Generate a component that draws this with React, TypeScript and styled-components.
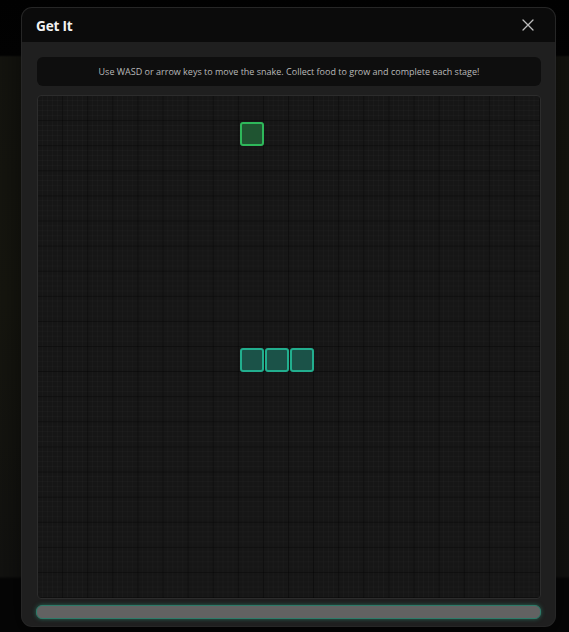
import styled, { createGlobalStyle } from "styled-components";

const GlobalStyle = createGlobalStyle`
  html, body {
    margin: 0;
    padding: 0;
    background: #050505;
    font-family: "Open Sans", "Noto Sans", "Liberation Sans", sans-serif;
  }
`;

const Backdrop = styled.div`
  width: 569px;
  height: 632px;
  display: flex;
  justify-content: flex-start;
  align-items: flex-start;
  padding: 8px 0 0 22px;
  box-sizing: border-box;
  background:
    linear-gradient(
      to bottom,
      #020202 0px,
      #030303 55px,
      #14140f 57px,
      #16160f 300px,
      #121210 576px,
      #060606 579px,
      #060606 100%
    );
`;

const Modal = styled.div`
  width: 533px;
  height: 618px;
  display: flex;
  flex-direction: column;
  background: #1f1f1f;
  border-radius: 10px;
  overflow: hidden;
  box-shadow: 0 0 0 1px #262626, 0 10px 30px rgba(0, 0, 0, 0.6);
`;

const Header = styled.div`
  height: 34px;
  display: flex;
  align-items: center;
  justify-content: space-between;
  padding: 0 20px 0 14px;
  background: #0b0b0b;
  flex-shrink: 0;
`;

const Title = styled.h2`
  margin: 0;
  font-size: 13.6px;
  font-weight: 700;
  color: #f2f2f2;
  letter-spacing: -0.2px;
`;

const CloseButton = styled.button`
  background: none;
  border: none;
  padding: 0;
  width: 14px;
  height: 14px;
  display: flex;
  align-items: center;
  justify-content: center;
  color: #bdbdbd;
  cursor: pointer;
`;

const Body = styled.div`
  flex: 1;
  display: flex;
  flex-direction: column;
  padding: 15px 14px 7px 15px;
`;

const Hint = styled.div`
  height: 29px;
  margin-bottom: 9px;
  display: flex;
  align-items: center;
  justify-content: center;
  background: #0e0e0e;
  border-radius: 6px;
  font-size: 9px;
  color: #b9b9b9;
`;

const Board = styled.div`
  width: 504px;
  height: 504px;
  box-sizing: border-box;
  border: 1px solid #2c2c2c;
  border-radius: 4px;
  display: grid;
  grid-template-columns: repeat(20, 1fr);
  grid-template-rows: repeat(20, 1fr);
  background-color: #161616;
  background-image:
    linear-gradient(to right, rgba(0, 0, 0, 0.45) 1px, transparent 1px),
    linear-gradient(to bottom, rgba(0, 0, 0, 0.45) 1px, transparent 1px),
    linear-gradient(to right, rgba(255, 255, 255, 0.018) 1px, transparent 1px),
    linear-gradient(to bottom, rgba(255, 255, 255, 0.018) 1px, transparent 1px);
  background-size: 25.1px 25.1px, 25.1px 25.1px, 5.02px 5.02px, 5.02px 5.02px;
  background-position: -1px -1px;
`;

const Cell = styled.div<{ $col: number; $row: number; $kind: "food" | "snake" }>`
  grid-column: ${(p) => p.$col + 1};
  grid-row: ${(p) => p.$row + 1};
  margin: 1px 0 0 1px;
  border-radius: 3px;
  box-sizing: border-box;
  border: 2px solid ${(p) => (p.$kind === "food" ? "#2eb85a" : "#22ae8e")};
  background: ${(p) => (p.$kind === "food" ? "#1f5431" : "#1b5248")};
`;

const Progress = styled.div`
  height: 12px;
  margin: 6px 0 0 -1px;
  border-radius: 6px;
  background: #626262;
  border: 1px solid #2d7a68;
  box-shadow: 0 0 4px rgba(45, 160, 130, 0.55);
`;

const food = { col: 8, row: 1 };
const snake = [
  { col: 8, row: 10 },
  { col: 9, row: 10 },
  { col: 10, row: 10 },
];

export default function App() {
  return (
    <>
      <GlobalStyle />
      <Backdrop>
        <Modal>
          <Header>
            <Title>Get It</Title>
            <CloseButton aria-label="Close">
              <svg width="12" height="12" viewBox="0 0 12 12" fill="none">
                <path d="M1 1 L11 11 M11 1 L1 11" stroke="currentColor" strokeWidth="1.3" strokeLinecap="round" />
              </svg>
            </CloseButton>
          </Header>
          <Body>
            <Hint>Use WASD or arrow keys to move the snake. Collect food to grow and complete each stage!</Hint>
            <Board>
              <Cell $kind="food" $col={food.col} $row={food.row} />
              {snake.map((s, i) => (
                <Cell key={i} $kind="snake" $col={s.col} $row={s.row} />
              ))}
            </Board>
            <Progress />
          </Body>
        </Modal>
      </Backdrop>
    </>
  );
}
